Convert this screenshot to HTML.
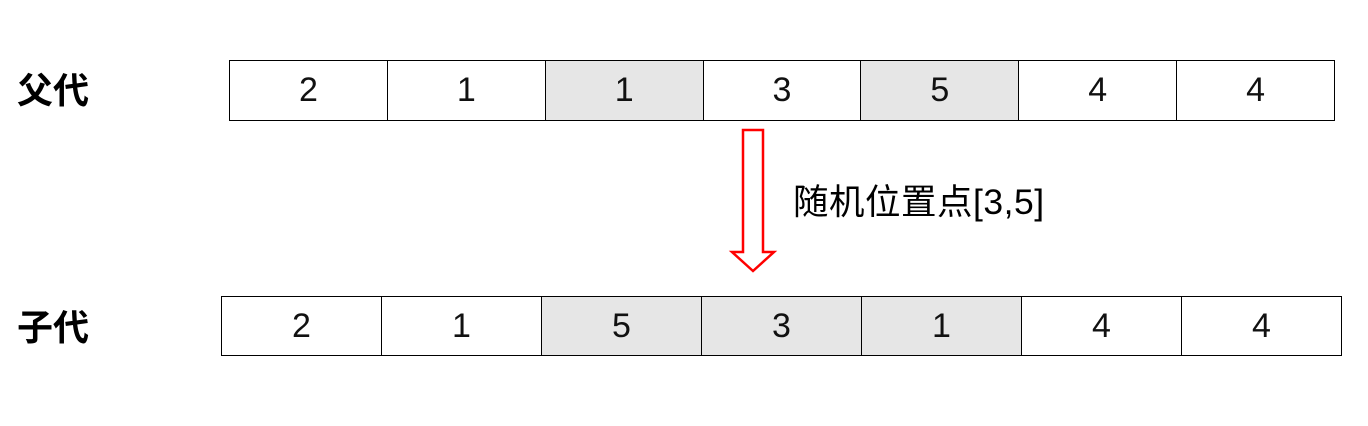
<!DOCTYPE html><html><head><meta charset="utf-8"><style>
body{margin:0;width:1368px;height:426px;background:#fff;position:relative;overflow:hidden;font-family:"Liberation Sans","Noto Sans CJK SC",sans-serif}
.lbl{position:absolute;left:17px;font-size:36px;font-weight:bold;line-height:40px}
.row{position:absolute;display:flex;border:1.5px solid #000;box-sizing:border-box}
.row div{flex:1;border-left:1px solid #000;display:flex;align-items:center;justify-content:center;font-size:34px;color:#111}
.row div:first-child{border-left:none}
.g{background:#e6e6e6}
.t{position:absolute;left:793px;top:181px;font-size:35.5px;line-height:42px;color:#000;letter-spacing:0.5px}
</style></head><body>
<div class="lbl" style="top:71px">父代</div>
<div class="lbl" style="top:308px">子代</div>
<div class="row" style="left:229px;top:60px;width:1106px;height:61px"><div>2</div><div>1</div><div class="g">1</div><div>3</div><div class="g">5</div><div>4</div><div>4</div></div>
<div class="row" style="left:221px;top:296px;width:1121px;height:60px"><div>2</div><div>1</div><div class="g">5</div><div class="g">3</div><div class="g">1</div><div>4</div><div>4</div></div>
<svg style="position:absolute;left:0;top:0" width="1368" height="426"><polygon points="743,130 763,130 763,252 774,252 753,271 732,252 743,252" fill="#fff" stroke="#f00" stroke-width="2.5"/></svg>
<div class="t">随机位置点[3,5]</div>
</body></html>
